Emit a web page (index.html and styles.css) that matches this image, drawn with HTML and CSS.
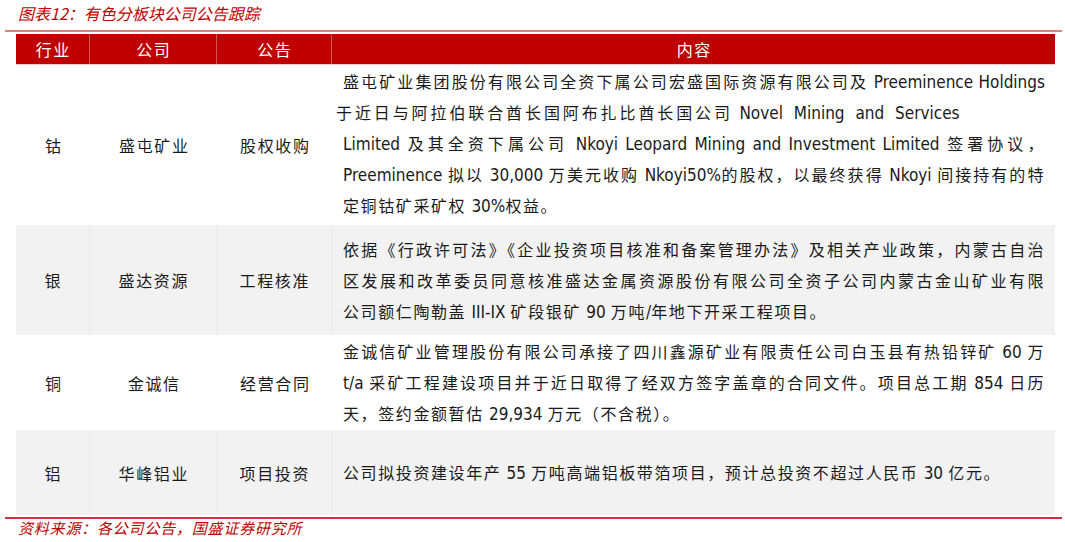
FILE: index.html
```html
<!DOCTYPE html>
<html lang="zh-CN">
<head>
<meta charset="utf-8">
<title>有色分板块公司公告跟踪</title>
<link rel="stylesheet" href="styles.css">
</head>
<body>
<div class="page">
  <div class="title">图表12：有色分板块公司公告跟踪</div>
  <div class="rule-top"></div>
  <div class="table">
    <div class="row head">
      <div class="cell">行业</div>
      <div class="cell">公司</div>
      <div class="cell">公告</div>
      <div class="cell last">内容</div>
    </div>
    <div class="row r1">
      <div class="cell">钴</div>
      <div class="cell">盛屯矿业</div>
      <div class="cell">股权收购</div>
      <div class="cell content">
        <div class="ln j">盛屯矿业集团股份有限公司全资下属公司宏盛国际资源有限公司及 <span class="en">Preeminence Holdings</span></div>
        <div class="ln short">于近日与阿拉伯联合酋长国阿布扎比酋长国公司 <span class="en wide">Novel Mining and Services</span></div>
        <div class="ln j"><span class="en">Limited</span> 及其全资下属公司 <span class="en">Nkoyi Leopard Mining and Investment Limited</span> 签署协议，</div>
        <div class="ln j"><span class="en">Preeminence</span> 拟以 <span class="en">30,000</span> 万美元收购 <span class="en">Nkoyi50%</span>的股权，以最终获得 <span class="en">Nkoyi</span> 间接持有的特</div>
        <div class="ln">定铜钴矿采矿权 <span class="en">30%</span>权益。</div>
      </div>
    </div>
    <div class="row r2 alt">
      <div class="cell">银</div>
      <div class="cell">盛达资源</div>
      <div class="cell">工程核准</div>
      <div class="cell content">
        <div class="ln j">依据《行政许可法》《企业投资项目核准和备案管理办法》及相关产业政策，内蒙古自治</div>
        <div class="ln j">区发展和改革委员同意核准盛达金属资源股份有限公司全资子公司内蒙古金山矿业有限</div>
        <div class="ln">公司额仁陶勒盖 <span class="en">III-IX</span> 矿段银矿 <span class="en">90</span> 万吨<span class="en">/</span>年地下开采工程项目。</div>
      </div>
    </div>
    <div class="row r3">
      <div class="cell">铜</div>
      <div class="cell">金诚信</div>
      <div class="cell">经营合同</div>
      <div class="cell content">
        <div class="ln j">金诚信矿业管理股份有限公司承接了四川鑫源矿业有限责任公司白玉县有热铅锌矿 <span class="en">60</span> 万</div>
        <div class="ln j"><span class="en">t/a</span> 采矿工程建设项目并于近日取得了经双方签字盖章的合同文件。项目总工期 <span class="en">854</span> 日历</div>
        <div class="ln">天，签约金额暂估 <span class="en">29,934</span> 万元（不含税）。</div>
      </div>
    </div>
    <div class="row r4 alt">
      <div class="cell">铝</div>
      <div class="cell">华峰铝业</div>
      <div class="cell">项目投资</div>
      <div class="cell content">
        <div class="ln">公司拟投资建设年产 <span class="en">55</span> 万吨高端铝板带箔项目，预计总投资不超过人民币 <span class="en">30</span> 亿元。</div>
      </div>
    </div>
  </div>
  <div class="rule-bottom"></div>
  <div class="source">资料来源：各公司公告，国盛证券研究所</div>
</div>
</body>
</html>
```
FILE: styles.css
```css
html, body {
  margin: 0;
  padding: 0;
  background: #ffffff;
}

body {
  font-family: "Noto Sans CJK SC", "DejaVu Sans", sans-serif;
  color: #1a1a1a;
}

.page {
  width: 1057px;
  padding: 0 3px 0 5px;
}

.title {
  padding: 3px 0 0 13px;
  height: 20px;
  line-height: 20px;
  font-size: 16px;
  font-style: italic;
  letter-spacing: 0;
  color: #c00000;
}

.rule-top {
  margin-top: 7px;
  height: 2px;
  background: #e08282;
}

.table {
  margin: 2px 0 0 11px;
  width: 1039px;
}

.row {
  display: grid;
  grid-template-columns: 74px 127px 115px 723px;
}

.cell {
  display: flex;
  align-items: center;
  justify-content: center;
  font-size: 16px;
  letter-spacing: 1.6px;
  text-indent: 1.6px;
}

.head {
  height: 31px;
  background: #c00000;
  color: #ffffff;
  border-bottom: 1px solid #f4c6c6;
  box-sizing: border-box;
}

.head .cell {
  border-right: 1px solid #d85252;
}

.head .cell.last {
  border-right: none;
}

.alt {
  background: #f2f2f2;
}

.alt .cell {
  border-right: 1px solid #ececec;
}

.alt .cell.content {
  border-right: none;
}

.r1 { height: 160px; }
.r2 { height: 110px; }
.r3 { height: 95px; }
.r4 { height: 85px; }

.cell.content {
  display: flex;
  flex-direction: column;
  align-items: stretch;
  justify-content: center;
  padding: 0 10px 0 11px;
  text-indent: 0;
}

.r1 .cell.content {
  padding-bottom: 4px;
}

.ln {
  line-height: 31px;
  height: 31px;
  text-align: left;
  white-space: nowrap;
}

.ln.j {
  text-align: justify;
  text-align-last: justify;
}

.ln.short {
  margin-left: -7px;
  letter-spacing: 2.9px;
}

.en {
  font-family: "DejaVu Sans Condensed", "DejaVu Sans", sans-serif;
  font-size: 17px;
  letter-spacing: 0;
}

.en.wide {
  word-spacing: 6px;
}

.rule-bottom {
  margin-top: 2px;
  height: 2px;
  background: #cc3340;
}

.source {
  padding-left: 13px;
  height: 18px;
  line-height: 18px;
  font-size: 15px;
  font-style: italic;
  letter-spacing: 0.8px;
  color: #c00000;
}
```
